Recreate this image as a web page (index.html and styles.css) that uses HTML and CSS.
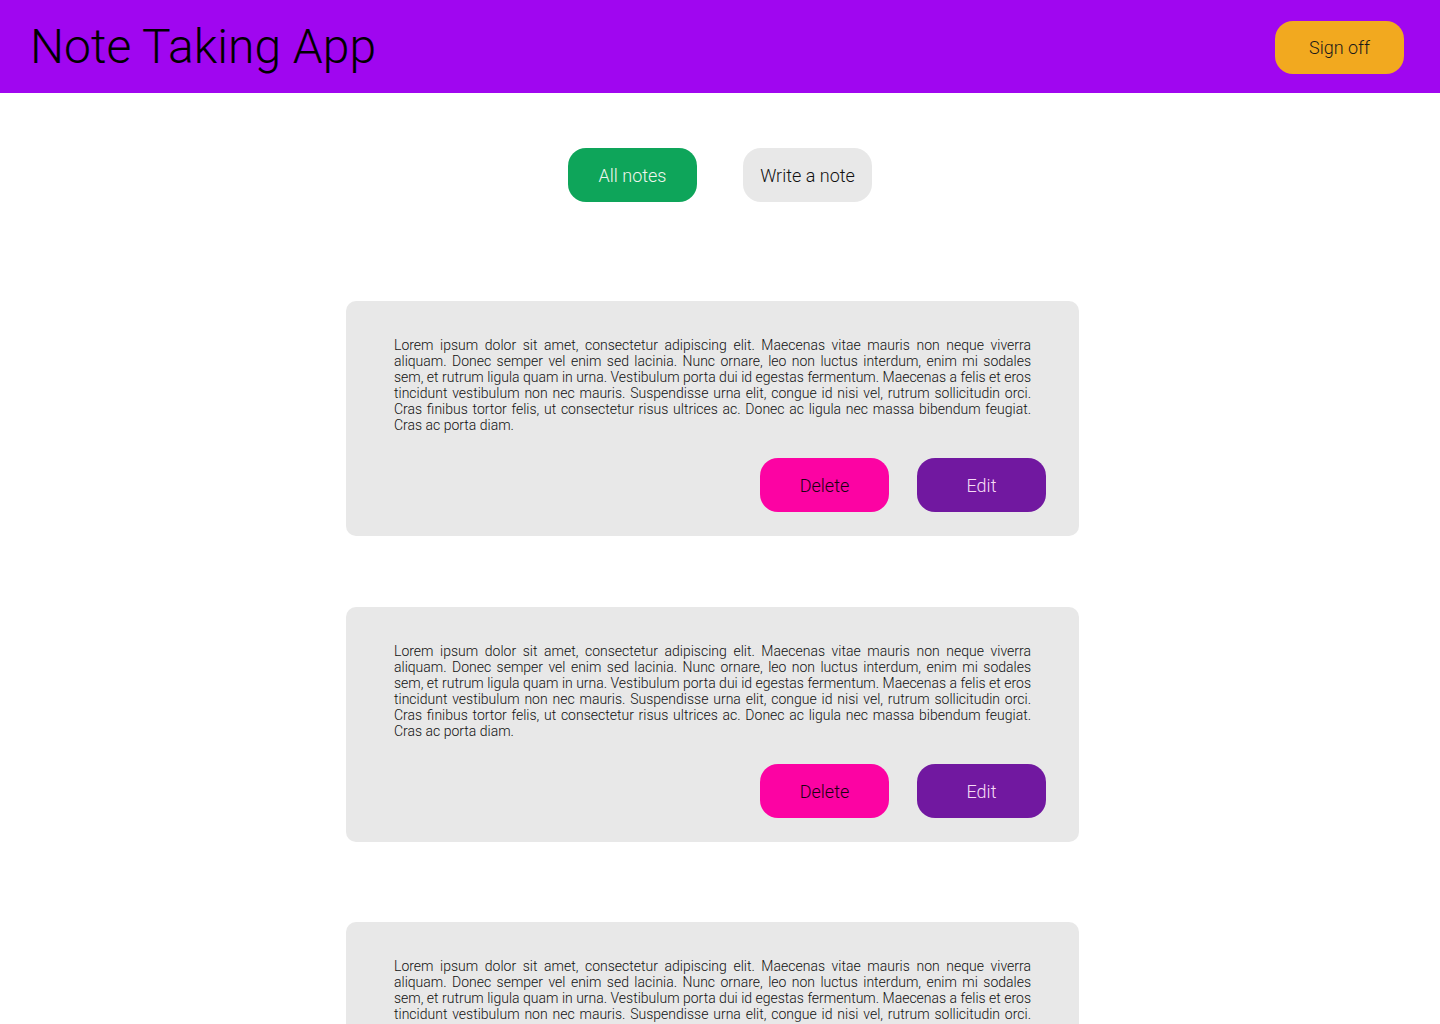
FILE: index.html
```html
<!DOCTYPE html>
<html>
<head>
<meta charset="utf-8">
<title>Note Taking App</title>
<link rel="stylesheet" href="styles.css">
</head>
<body>
<header class="topbar">
  <h1 class="title">Note Taking App</h1>
  <button class="btn btn-sign">Sign off</button>
</header>
<nav class="tabs">
  <button class="btn btn-all">All notes</button>
  <button class="btn btn-write">Write a note</button>
</nav>
<main class="notes">
  <section class="card card-1">
    <p class="note-text">Lorem ipsum dolor sit amet, consectetur adipiscing elit. Maecenas vitae mauris non neque viverra aliquam. Donec semper vel enim sed lacinia. Nunc ornare, leo non luctus interdum, enim mi sodales sem, et rutrum ligula quam in urna. Vestibulum porta dui id egestas fermentum. Maecenas a felis et eros tincidunt vestibulum non nec mauris. Suspendisse urna elit, congue id nisi vel, rutrum sollicitudin orci. Cras finibus tortor felis, ut consectetur risus ultrices ac. Donec ac ligula nec massa bibendum feugiat. Cras ac porta diam.</p>
    <div class="actions">
      <button class="btn btn-delete">Delete</button>
      <button class="btn btn-edit">Edit</button>
    </div>
  </section>
  <section class="card card-2">
    <p class="note-text">Lorem ipsum dolor sit amet, consectetur adipiscing elit. Maecenas vitae mauris non neque viverra aliquam. Donec semper vel enim sed lacinia. Nunc ornare, leo non luctus interdum, enim mi sodales sem, et rutrum ligula quam in urna. Vestibulum porta dui id egestas fermentum. Maecenas a felis et eros tincidunt vestibulum non nec mauris. Suspendisse urna elit, congue id nisi vel, rutrum sollicitudin orci. Cras finibus tortor felis, ut consectetur risus ultrices ac. Donec ac ligula nec massa bibendum feugiat. Cras ac porta diam.</p>
    <div class="actions">
      <button class="btn btn-delete">Delete</button>
      <button class="btn btn-edit">Edit</button>
    </div>
  </section>
  <section class="card card-3">
    <p class="note-text">Lorem ipsum dolor sit amet, consectetur adipiscing elit. Maecenas vitae mauris non neque viverra aliquam. Donec semper vel enim sed lacinia. Nunc ornare, leo non luctus interdum, enim mi sodales sem, et rutrum ligula quam in urna. Vestibulum porta dui id egestas fermentum. Maecenas a felis et eros tincidunt vestibulum non nec mauris. Suspendisse urna elit, congue id nisi vel, rutrum sollicitudin orci. Cras finibus tortor felis, ut consectetur risus ultrices ac. Donec ac ligula nec massa bibendum feugiat. Cras ac porta diam.</p>
    <div class="actions">
      <button class="btn btn-delete">Delete</button>
      <button class="btn btn-edit">Edit</button>
    </div>
  </section>
</main>
</body>
</html>
```
FILE: styles.css
```css
* { box-sizing: border-box; }
html, body { margin: 0; padding: 0; }
body {
  font-family: Roboto, "Liberation Sans", sans-serif;
  font-weight: 300;
  color: #000;
  background: #fff;
}
.topbar {
  height: 93px;
  background: #a006f0;
  display: flex;
  align-items: center;
  justify-content: space-between;
  padding: 0 36px 0 30px;
}
.title {
  margin: 0;
  font-size: 48px;
  font-weight: 300;
  line-height: 1;
  color: #000;
}
.btn {
  font-family: Roboto, "Liberation Sans", sans-serif;
  font-weight: 300;
  font-size: 18px;
  width: 129px;
  height: 54px;
  border: none;
  border-radius: 18px;
  padding: 0;
  cursor: pointer;
}
.btn-sign { background: #f2a91f; color: #1a1a1a; height: 53px; margin-top: 1px; }
.tabs {
  display: flex;
  justify-content: center;
  gap: 46px;
  margin-top: 55px;
}
.btn-all { background: #0ea55a; color: #eef6ee; }
.btn-write { background: #e8e8e8; color: #111; }
.notes {
  display: flex;
  flex-direction: column;
  padding-left: 346px;
}
.card {
  width: 733px;
  background: #e8e8e8;
  border-radius: 10px;
  padding: 36px 33px 24px 48px;
}
.card-1 { margin-top: 99px; }
.card-2 { margin-top: 71px; }
.card-3 { margin-top: 80px; }
.note-text {
  margin: 0 15px 0 0;
  font-size: 14px;
  line-height: 16px;
  text-align: justify;
  color: #111;
}
.actions {
  display: flex;
  justify-content: flex-end;
  gap: 28px;
  margin-top: 25px;
}
.btn-delete { background: #fc03a3; color: #1a0012; }
.btn-edit { background: #7118a0; color: #f6dcf6; }
```
